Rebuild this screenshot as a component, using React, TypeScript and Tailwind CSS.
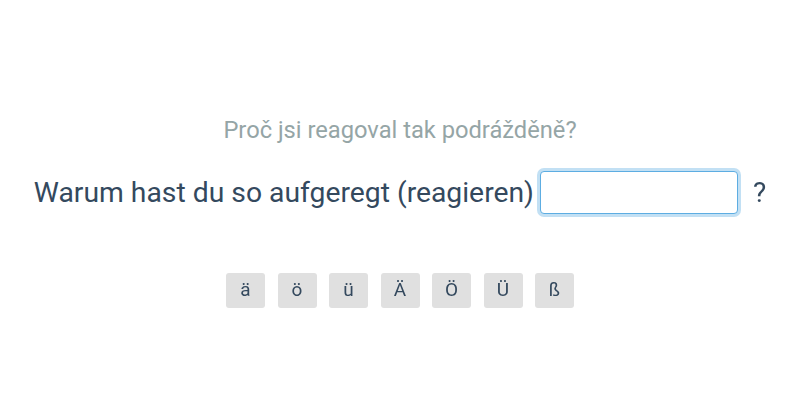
import { useState } from 'react';

const letters = ['ä', 'ö', 'ü', 'Ä', 'Ö', 'Ü', 'ß'];

export default function App() {
  const [answer, setAnswer] = useState('');

  return (
    <div className="w-[800px] h-[400px] bg-white flex flex-col items-center font-['Roboto',sans-serif]">
      {/* Prompt */}
      <p className="mt-[116px] text-[23.7px] leading-[28px] text-[#95a5a6]">Proč jsi reagoval tak podrážděně?</p>

      {/* Sentence + input */}
      <div className="mt-[27px] h-[43px] flex items-center">
        <span className="text-[28.3px] leading-[34px] text-[#34495e]">Warum hast du so aufgeregt (reagieren)</span>
        <input
          type="text"
          autoFocus
          value={answer}
          onChange={(e) => setAnswer(e.target.value)}
          className="ml-[6px] w-[198px] h-[43px] rounded-[4px] border border-[#5dade2] bg-white px-2 text-[22px] text-[#34495e] outline-none shadow-[0_0_0_3px_rgba(133,193,233,0.5)]"
        />
        <span className="ml-[15px] text-[28px] leading-[34px] text-[#34495e]">?</span>
      </div>

      {/* Special characters */}
      <div className="mt-[59px] flex gap-[12.5px]">
        {letters.map((l) => (
          <button
            key={l}
            onClick={() => setAnswer(answer + l)}
            className="w-[39px] h-[35px] rounded-[3px] bg-[#e0e0e0] text-[19px] text-[#34495e] flex items-center justify-center"
          >
            {l}
          </button>
        ))}
      </div>
    </div>
  );
}
